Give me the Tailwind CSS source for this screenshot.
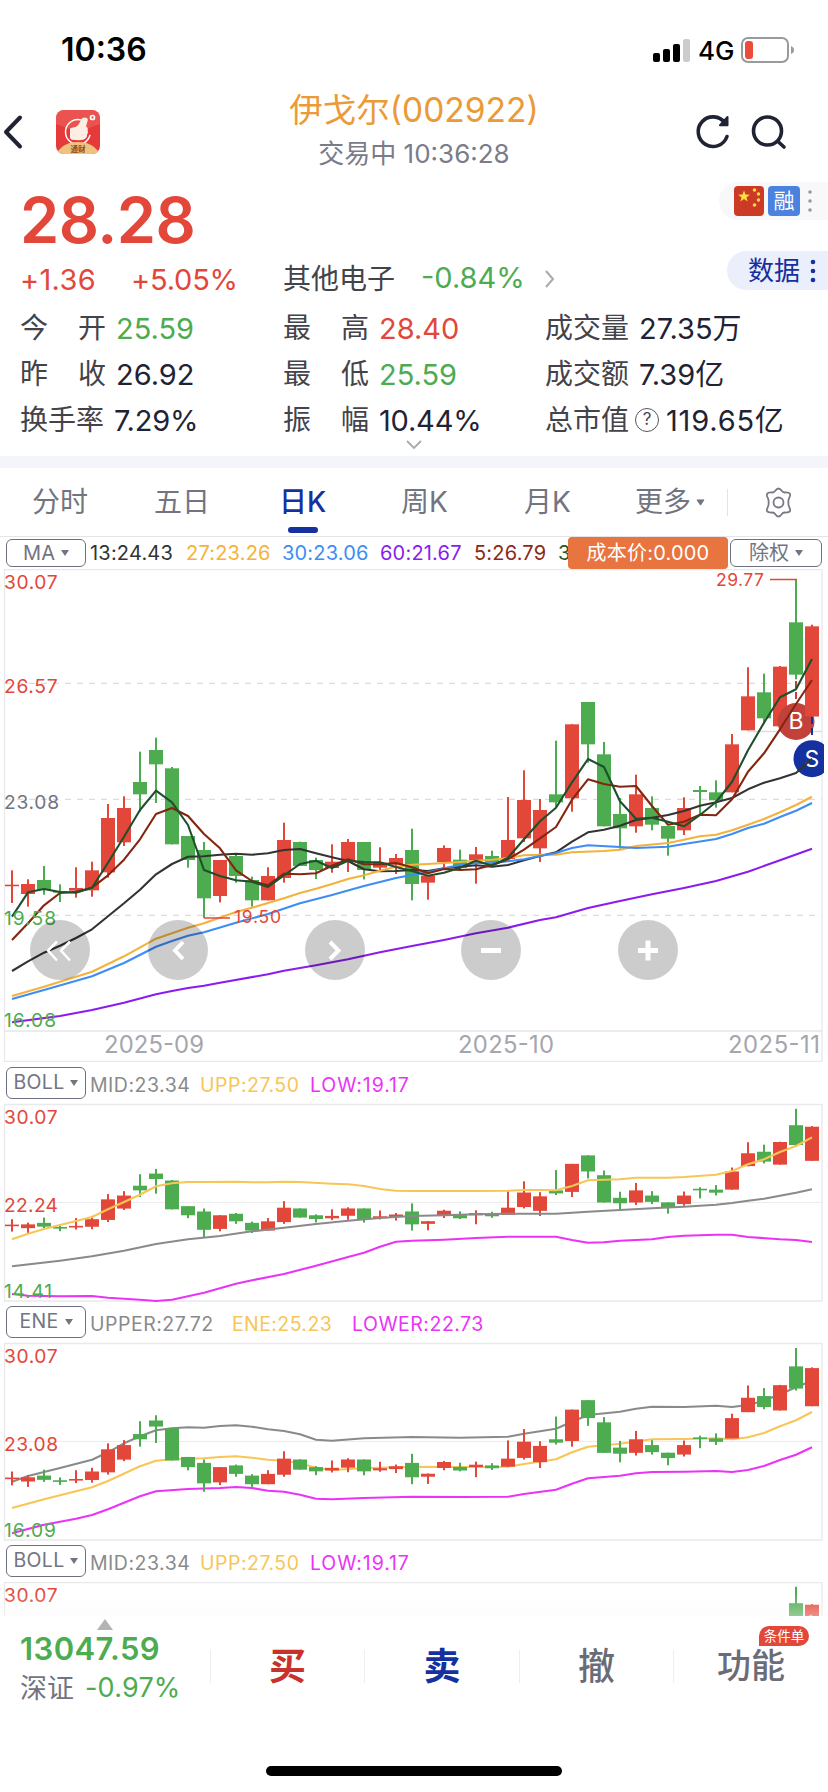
<!DOCTYPE html>
<html lang="zh-CN">
<head>
    <meta charset="UTF-8">
    <meta name="viewport" content="width=device-width, initial-scale=1.0">
    <title>伊戈尔(002922)</title>
    <script src="https://cdn.jsdelivr.net/npm/@tailwindcss/browser@4"></script>
</head>
<body class="bg-white font-['Inter','Noto_Sans_CJK_SC',sans-serif] text-[#1f2333] w-[828px] h-[1792px] overflow-hidden">

    <!-- Status bar -->
    <div class="h-[88px] flex items-center justify-between pl-[61px] pr-[34px] pt-[12px]">
        <span class="text-[32px] font-semibold text-black">10:36</span>
        <div class="flex items-center">
            <svg class="w-[38px] h-[24px]" viewBox="0 0 38 24">
                <rect x="0" y="15" width="7" height="9" rx="2"/>
                <rect x="10" y="11" width="7" height="13" rx="2"/>
                <rect x="20" y="6" width="7" height="18" rx="2"/>
                <rect x="30" y="1" width="7" height="23" rx="2" fill="#ccc"/>
            </svg>
            <span class="text-[26px] font-medium text-black ml-[7px] w-[43px]">4G</span>
            <svg class="w-[53px] h-[26px]" viewBox="0 0 53 26">
                <rect x="1" y="1" width="46" height="24" rx="6" fill="none" stroke="#9a9a9a" stroke-width="2"/>
                <rect x="4" y="4" width="8" height="18" rx="3" fill="#eb4d3d"/>
                <path d="M50 9v8c2-1 3-2 3-4s-1-3-3-4z" fill="#9a9a9a"/>
            </svg>
        </div>
    </div>

    <!-- Header -->
    <header class="h-[92px] flex items-center relative pb-[4px]">
        <svg class="w-[26px] h-[36px]" viewBox="0 0 26 36" fill="none" stroke="#1f2333" stroke-width="4" stroke-linecap="round" stroke-linejoin="round">
            <path d="M20 3.500 6 18 20 32.500"/>
        </svg>
        <svg class="w-[44px] h-[44px] ml-[30px] rounded-[8px]" viewBox="0 0 44 44">
            <rect width="44" height="44" fill="#e5393a"/>
            <path d="M0 0h44v14L22 22 0 14z" fill="#ee6a60" opacity=".55"/>
            <circle cx="22" cy="22" r="12.500" fill="none" stroke="#fff" stroke-width="1.500" stroke-dasharray="62 17" stroke-dashoffset="-3"/>
            <path d="M15 18c3-.5 6-1 7.500-3.500L26 8.500c1.500-1.500 6-1.200 5.800 1.500L30 16.500c2 .5 2 2.500 1.600 4 .6 1.500.3 3-.6 4 .2 2-.6 3.500-1.800 4-1 2-7 2-13.200 1.200-1.500-.3-2-1.500-2-3v-6c0-1.600-.1-2.500 1-2.700z" fill="#fdeee4"/>
            <circle cx="36.500" cy="7.500" r="2" fill="none" stroke="#fff" stroke-width="1.700"/>
            <path d="M2 44v-3c5-6 11-9 20-9s15 3 20 9v3z" fill="#f0c27f"/>
            <text x="22" y="41.500" font-size="7.500" font-weight="700" text-anchor="middle" fill="#8b4a20">通财</text>
        </svg>
        <div class="absolute inset-0 flex flex-col items-center pointer-events-none">
            <h1 class="text-[33.500px] leading-[44px] text-[#ea9a36]">伊戈尔(002922)</h1>
            <p class="text-[26px] leading-[36px] mt-[4px] text-[#7a7c89]">交易中 10:36:28</p>
        </div>
        <div class="ml-auto flex items-center gap-[18px] pr-[40px]">
            <svg class="w-[38px] h-[38px]" viewBox="0 0 38 38" fill="none" stroke="#1f2333" stroke-width="3.600" stroke-linecap="round">
                <path d="M33 23.500A14.800 14.800 0 1 1 31 10"/>
                <path d="M33.500 4v8.200h-7.500z" fill="#1f2333" stroke-width="2" stroke-linejoin="round"/>
            </svg>
            <svg class="w-[38px] h-[38px]" viewBox="0 0 38 38" fill="none" stroke="#1f2333" stroke-width="3.600" stroke-linecap="round">
                <circle cx="17.500" cy="18" r="14"/>
                <path d="M28 28.500 34 34"/>
            </svg>
        </div>
    </header>

    <!-- Quote -->
    <section class="h-[276px] relative pl-[20px]">
        <div class="h-[74px] flex items-center pt-[6px] text-[63px] leading-none font-semibold text-[#e3473a] tracking-[-0.5px]">28.28</div>

        <div class="absolute right-0 top-[2px] w-[109px] h-[38px] rounded-l-full bg-[#f8f8fa] flex items-center pl-[15px] gap-[4px]">
            <svg class="w-[30px] h-[30px] rounded-[4px]" viewBox="0 0 30 30">
                <rect width="30" height="30" fill="#cb3a25"/>
                <path d="M10 4.500l1.500 4.100 4.400.1-3.500 2.700 1.300 4.200-3.700-2.500-3.700 2.500 1.300-4.200-3.500-2.700 4.400-.1z" fill="#fadf3c"/>
                <g fill="#fadf3c"><circle cx="20.500" cy="4" r="1.800"/><circle cx="24.500" cy="8" r="1.700"/><circle cx="24.500" cy="14" r="1.700"/><circle cx="20.500" cy="19" r="1.800"/></g>
            </svg>
            <span class="w-[32px] h-[30px] rounded-[4px] bg-[#4b82e0] text-white text-[21px] leading-[30px] text-center">融</span>
            <svg class="w-[6px] h-[24px] ml-[3px]" viewBox="0 0 6 24" fill="#999"><circle cx="3" cy="3" r="1.800"/><circle cx="3" cy="12" r="1.800"/><circle cx="3" cy="21" r="1.800"/></svg>
        </div>
        <div class="absolute right-0 top-[71px] w-[101px] h-[39px] rounded-l-full bg-[#ebeefb] flex items-center pl-[21px]">
            <span class="text-[26px] leading-none text-[#15309f]">数据</span>
            <svg class="w-[6px] h-[24px] ml-[10px]" viewBox="0 0 6 24" fill="#15309f"><circle cx="3" cy="3" r="2.300"/><circle cx="3" cy="12" r="2.300"/><circle cx="3" cy="21" r="2.300"/></svg>
        </div>

        <div class="h-[50px] flex items-center text-[29px] leading-none text-[#e3473a]">
            <span class="w-[111px] tracking-[0.3px]">+1.36</span>
            <span class="w-[152px] tracking-[-0.2px]">+5.05%</span>
            <span class="w-[138px] text-[28px] text-[#43434a]">其他电子</span>
            <span class="w-[124px] text-[#4dab50] -mt-[3px]">-0.84%</span>
            <svg class="w-[10px] h-[18px]" viewBox="0 0 10 18" fill="none" stroke="#aaa" stroke-width="2"><path d="M1 1l7 8-7 8"/></svg>
        </div>

        <div class="grid grid-cols-[263px_262px_1fr] grid-rows-[46px_46px_46px] items-center pt-[1px] text-[28px] leading-none text-[#43434a]">
            <div class="flex"><span class="w-[86px] flex justify-between mr-[10px]"><i class="not-italic">今</i><i class="not-italic">开</i></span><b class="font-normal text-[29px] text-[#4dab50]">25.59</b></div>
            <div class="flex"><span class="w-[86px] flex justify-between mr-[10px]"><i class="not-italic">最</i><i class="not-italic">高</i></span><b class="font-normal text-[29px] text-[#e3473a]">28.40</b></div>
            <div class="flex"><span class="w-[94px]">成交量</span><b class="font-normal text-[29px] text-[#1f2333]">27.35万</b></div>
            <div class="flex"><span class="w-[86px] flex justify-between mr-[10px]"><i class="not-italic">昨</i><i class="not-italic">收</i></span><b class="font-normal text-[29px] text-[#1f2333]">26.92</b></div>
            <div class="flex"><span class="w-[86px] flex justify-between mr-[10px]"><i class="not-italic">最</i><i class="not-italic">低</i></span><b class="font-normal text-[29px] text-[#4dab50]">25.59</b></div>
            <div class="flex"><span class="w-[94px]">成交额</span><b class="font-normal text-[29px] text-[#1f2333]">7.39亿</b></div>
            <div class="flex"><span class="w-[94px]">换手率</span><b class="font-normal text-[29px] text-[#1f2333] tracking-[-0.2px]">7.29%</b></div>
            <div class="flex"><span class="w-[86px] flex justify-between mr-[10px]"><i class="not-italic">振</i><i class="not-italic">幅</i></span><b class="font-normal text-[29px] text-[#1f2333] tracking-[-0.2px]">10.44%</b></div>
            <div class="flex items-center">
                <span class="w-[90px]">总市值</span>
                <span class="w-[24px] h-[24px] rounded-full border-[1.500px] border-[#55565e] text-[17px] leading-[21px] text-center mr-[7px]">?</span>
                <b class="font-normal text-[29px] text-[#1f2333] tracking-[0.8px]">119.65亿</b>
            </div>
        </div>
        <svg class="w-[16px] h-[10px] mx-auto -translate-x-[10px] -translate-y-[3px]" viewBox="0 0 16 10" fill="none" stroke="#aaa" stroke-width="1.800"><path d="M1 1l7 7 7-7"/></svg>
    </section>
    <div class="h-[12px] bg-[#f4f5fa]"></div>

    <!-- Period tabs -->
    <nav class="h-[69px] flex items-center text-[28px] leading-none text-[#72747f] pl-[32px] relative border-b border-[#e5e5e8]">
        <span class="w-[122px]">分时</span>
        <span class="w-[125px]">五日</span>
        <span class="w-[122px] font-medium text-[#15309f] relative">日K<i class="absolute left-[9px] top-[39px] w-[30px] h-[6px] rounded-full bg-[#15309f]"></i></span>
        <span class="w-[123px]">周K</span>
        <span class="w-[111px]">月K</span>
        <span class="w-[61px]">更多</span>
        <svg class="w-[9px] h-[7px]" viewBox="0 0 10 8" fill="#72747f" stroke="#72747f" stroke-width="1" stroke-linejoin="round"><path d="M1 1h8L5 7z"/></svg>
        <i class="w-px h-[27px] bg-[#e3e4ea] ml-[22px] mr-[35px]"></i>
        <svg class="w-[31px] h-[31px]" viewBox="0 0 31 31" fill="none" stroke="#777985" stroke-width="1.800" stroke-linejoin="round">
            <path d="M15.500 1.500c1.500 0 2.300 1 3.200 2.300.9 1.300 1.600 1.800 3 1.700 3-.2 4.400-.2 5.200 1.200.8 1.300.3 2.500-.9 4.700-.9 1.600-.9 6.600 0 8.200 1.200 2.200 1.700 3.400.9 4.700-.8 1.400-2.200 1.400-5.200 1.200-1.400-.1-2.100.4-3 1.700-.9 1.300-1.700 2.300-3.200 2.300s-2.300-1-3.200-2.300c-.9-1.300-1.600-1.800-3-1.700-3 .2-4.400.2-5.200-1.200-.8-1.300-.3-2.500.9-4.700.9-1.600.9-6.600 0-8.200C3.800 9.200 3.300 8 4.100 6.700c.8-1.400 2.200-1.400 5.200-1.200 1.400.1 2.100-.4 3-1.700.9-1.300 1.700-2.300 3.200-2.300z"/>
            <circle cx="15.500" cy="15.500" r="5"/>
        </svg>
    </nav>

    <!-- MA legend -->
    <div class="h-[32px] flex items-center text-[20px] leading-none pl-[6px] relative">
        <span class="w-[80px] h-[28px] border-[1.500px] border-[#6e7080] rounded-[6px] flex items-center justify-center gap-[6px] text-[#72747f]">MA<svg class="w-[8px] h-[6px]" viewBox="0 0 8 6" fill="#72747f"><path d="M0 0h8L4 6z"/></svg></span>
        <span class="w-[96px] ml-[4px] tracking-[0.2px] text-[#333]">13:24.43</span>
        <span class="w-[96px] tracking-[0.2px] text-[#f4b23c]">27:23.26</span>
        <span class="w-[98px] tracking-[0.2px] text-[#3d8df5]">30:23.06</span>
        <span class="w-[94px] tracking-[0.2px] text-[#8a1cf0]">60:21.67</span>
        <span class="w-[84px] tracking-[0.2px] text-[#8b2a14]">5:26.79</span>
        <span class="w-[10px] text-[#1f5a35]">3</span>
        <span class="absolute left-[568px] top-0 w-[160px] h-[32px] rounded-[4px] bg-[#e8743f] text-white flex items-center justify-center tracking-[0.2px]">成本价:0.000</span>
        <span class="absolute left-[730px] top-[2px] w-[92px] h-[28px] bg-white border-[1.500px] border-[#6e7080] rounded-[6px] flex items-center justify-center gap-[6px] text-[#72747f]">除权<svg class="w-[8px] h-[6px]" viewBox="0 0 8 6" fill="#72747f"><path d="M0 0h8L4 6z"/></svg></span>
    </div>

    <svg id="main" class="block w-[828px] h-[493px]" viewBox="0 569 828 493"></svg>

    <div class="h-[42px] flex items-center text-[19.500px] leading-none pl-[6px]">
        <span class="w-[80px] h-[32px] border-[1.500px] border-[#6e7080] rounded-[6px] flex items-center justify-center gap-[6px] tracking-[0.3px] text-[#72747f]">BOLL<svg class="w-[8px] h-[6px]" viewBox="0 0 8 6" fill="#72747f"><path d="M0 0h8L4 6z"/></svg></span>
        <span class="w-[110px] ml-[4px] mt-[5px] tracking-[0.5px] text-[#8a8a8a]">MID:23.34</span>
        <span class="w-[110px] mt-[5px] tracking-[0.5px] text-[#f7c657]">UPP:27.50</span>
        <span class="mt-[5px] tracking-[0.9px] text-[#ea33f7]">LOW:19.17</span>
    </div>
    <svg id="boll" class="block w-[828px] h-[197px] overflow-visible" viewBox="0 1104 828 197"></svg>

    <div class="h-[42px] flex items-center text-[19.500px] leading-none pl-[6px]">
        <span class="w-[80px] h-[32px] border-[1.500px] border-[#6e7080] rounded-[6px] flex items-center justify-center gap-[6px] tracking-[0.3px] text-[#72747f]">ENE<svg class="w-[8px] h-[6px]" viewBox="0 0 8 6" fill="#72747f"><path d="M0 0h8L4 6z"/></svg></span>
        <span class="w-[142px] ml-[4px] mt-[5px] tracking-[0.5px] text-[#8a8a8a]">UPPER:27.72</span>
        <span class="w-[120px] mt-[5px] tracking-[0.4px] text-[#f7c657]">ENE:25.23</span>
        <span class="mt-[5px] tracking-[0.5px] text-[#ea33f7]">LOWER:22.73</span>
    </div>
    <svg id="ene" class="block w-[828px] h-[197px] overflow-visible" viewBox="0 1343 828 197"></svg>

    <div class="h-[42px] flex items-center text-[19.500px] leading-none pl-[6px]">
        <span class="w-[80px] h-[32px] border-[1.500px] border-[#6e7080] rounded-[6px] flex items-center justify-center gap-[6px] tracking-[0.3px] text-[#72747f]">BOLL<svg class="w-[8px] h-[6px]" viewBox="0 0 8 6" fill="#72747f"><path d="M0 0h8L4 6z"/></svg></span>
        <span class="w-[110px] ml-[4px] mt-[5px] tracking-[0.5px] text-[#8a8a8a]">MID:23.34</span>
        <span class="w-[110px] mt-[5px] tracking-[0.5px] text-[#f7c657]">UPP:27.50</span>
        <span class="mt-[5px] tracking-[0.9px] text-[#ea33f7]">LOW:19.17</span>
    </div>
    <div class="relative h-[34px]">
        <svg id="boll2" class="block w-[828px] h-[34px]" viewBox="0 1582 828 34"></svg>
        <div class="absolute inset-x-0 bottom-0 h-[24px] bg-linear-to-b from-[#fafafa]/0 to-[#fafafa]/40"></div>
    </div>

    <!-- Trade bar -->
    <footer class="h-[176px] relative bg-white">
        <svg class="absolute left-[97px] top-[3px] w-[16px] h-[11px]" viewBox="0 0 16 11" fill="#b3b3b3"><path d="M8 0l8 11H0z"/></svg>
        <div class="flex h-[100px]">
            <div class="w-[210px] pl-[20px] pt-[14px]">
                <div class="text-[31px] leading-[38px] font-semibold text-[#4dab50] tracking-[0.4px]">13047.59</div>
                <div class="flex items-center h-[40px] text-[27px] leading-none text-[#72747f]">
                    <span class="w-[65px]">深证</span><span class="text-[#4dab50] tracking-[0.2px] -mt-[2px]">-0.97%</span>
                </div>
            </div>
            <div class="w-[154px] flex items-center justify-center text-[37px] leading-none font-bold text-[#c8322d]"><i class="w-px h-[33px] bg-[#ededf3]"></i><span class="mx-auto">买</span></div>
            <div class="w-[155px] flex items-center justify-center text-[37px] leading-none font-bold text-[#15309f]"><i class="w-px h-[33px] bg-[#ededf3]"></i><span class="mx-auto">卖</span></div>
            <div class="w-[154px] flex items-center justify-center text-[37px] leading-none font-medium text-[#6a6c78]"><i class="w-px h-[33px] bg-[#ededf3]"></i><span class="mx-auto">撤</span></div>
            <div class="w-[155px] flex items-center justify-center text-[34px] leading-none font-medium text-[#6a6c78] relative">
                <i class="w-px h-[33px] bg-[#ededf3]"></i><span class="mx-auto">功能</span>
                <span class="absolute left-[86px] top-[10px] w-[50px] h-[20px] rounded-t-full rounded-br-full bg-[#e3473a] text-white text-[13.500px] leading-[20px] text-center font-normal">条件单</span>
            </div>
        </div>
        <div class="absolute left-[266px] top-[150px] w-[296px] h-[10px] rounded-full bg-black"></div>
    </footer>

    <script>
        const RED = '#e3473a';
        const GREEN = '#4dab50';

        // [up, high, body top, body bottom, low], one entry per day, in thirds of a pixel below y=560
        const days = [
            [1,931,974,978,1029],[1,958,972,1002,1040],[0,918,960,990,1004],[0,973,993,998,1026],[1,922,984,992,1013],
            [1,905,931,991,1010],[1,732,774,937,953],[1,709,744,847,858],[0,575,666,703,755],[0,533,570,613,729],
            [0,621,625,853,853],[0,828,828,900,923],[0,846,870,1015,1074],[1,900,900,1008,1027],[0,882,888,948,968],
            [0,950,960,1021,1040],[1,922,948,1021,1021],[1,788,840,954,968],[0,845,846,918,918],[0,893,900,930,957],
            [1,853,905,924,938],[1,837,846,904,936],[0,846,846,930,958],[1,862,908,923,933],[1,882,894,914,942],
            [0,806,870,972,1021],[1,945,947,968,1019],[1,856,864,906,922],[0,869,899,924,930],[1,861,883,900,971],
            [0,872,888,908,920],[1,711,840,897,898],[1,631,720,835,846],[1,717,750,865,906],[0,542,703,727,740],
            [1,493,493,715,755],[0,426,426,553,608],[0,546,583,799,799],[0,714,762,805,866],[1,644,703,799,818],
            [0,709,744,794,811],[0,798,798,836,887],[1,712,744,811,825],[0,678,690,696,766],[0,661,697,721,743],
            [1,522,553,697,697],[1,322,409,511,511],[0,341,397,475,490],[1,318,320,499,499],[0,57,187,344,358],
            [1,194,199,469,469]
        ];
        const toPrice = v => 26.57 + (370 - v) / 3 / 33.2;

        // day index -> height, same unit as above, measured from each chart's base
        const ma3 = [1070,997,987,996,998,983,908,830,750,692,727,795,930,948,961,965,981,946,912,902,924,902,906,907,921,933,947,938,923,902,917,893,838,784,743,667,597,621,724,776,773,785,799,765,726,666,571,488,412,388,297];
        const ma5 = [1140,1090,1036,999,995,983,946,899,838,762,744,768,822,865,931,963,976,941,943,940,917,898,913,913,909,922,940,927,930,928,915,898,869,835,801,719,658,672,680,678,738,794,785,764,766,718,635,580,508,432,360];
        const ma13 = [1233,1204,1178,1157,1134,1108,1069,1030,989,943,912,890,889,884,881,884,880,870,867,880,892,903,928,934,933,930,933,925,920,916,920,915,901,888,877,845,817,809,797,780,773,765,753,737,727,714,688,668,655,639,596];
        const ma27 = {0:1308,2:1280,5:1235,7:1189,9:1136,11:1103,12:1090,14:1056,15:1043,16:1029,17:1015,18:999,19:986,20:972,21:957,22:946,23:932,24:920,25:914,26:912,27:909,28:906,29:902,30:899,31:894,32:886,33:884,34:884,35:877,37:873,38:869,39:858,41:849,42:839,43:829,44:824,45:811,46:794,47:777,48:757,49:735,50:710};
        const ma30 = {0:1317,2:1290,5:1249,7:1209,9:1160,10:1143,11:1127,12:1117,14:1088,16:1062,18:1030,20:1005,22:978,24:954,25:945,26:937,27:925,28:915,29:910,30:910,31:904,32:898,33:888,34:879,35:864,36:856,38:861,39:864,41:860,42:852,44:837,45:822,46:804,47:791,48:771,49:752,50:729};
        const ma60 = {0:1387,3:1368,5:1350,7:1328,9:1303,10:1293,11:1284,12:1277,13:1268,16:1243,17:1232,19:1216,21:1198,23:1177,25:1158,27:1140,29:1120,31:1103,33:1080,34:1072,36:1044,38:1023,40:1003,42:984,44:963,46:935,48:901,50:866};

        const bollUpp = {0:538,1:521,2:507,5:471,6:448,8:404,9:379,10:370,11:366,12:366,14:365,15:367,16:367,17:365,18:366,20:371,21:373,22:378,23:387,24:392,25:393,29:393,31:392,32:390,33:390,34:391,35:378,36:361,38:358,39:353,41:353,42:351,44:344,45:333,46:313,47:298,48:276,49:258,50:232};
        const bollMid = {0:619,3:602,5:589,7:572,9:552,11:538,13:528,15:514,17:503,19:492,21:482,23:474,25:468,27:466,29:463,31:461,34:461,36:455,38:450,40:445,42:440,44:434,45:429,46:422,47:416,49:398,50:388};
        const bollLow = {0:702,1:707,3:709,5:708,6:713,8:719,9:723,10:719,11:709,12:698,14:671,15:661,17:642,19:617,21:591,22:578,23:560,24:545,25:542,27:539,29:534,31:530,34:530,35:540,36:548,37:547,38:542,40:538,41:531,42:527,44:524,45:524,46:531,48:538,49:540,50:546};

        const eneUpper = {0:545,1:528,3:504,5:479,6:457,7:430,8:409,9:391,10:385,11:382,12:383,13:378,14:376,15:380,16:388,17:393,18:403,19:419,20:422,22:415,25:411,28:413,31:410,32:401,34:386,35:365,36:345,38:335,39:326,40:320,42:321,44:317,45:321,46:315,47:302,48:283,49:262,50:242};
        const eneMid = {0:624,2:598,5:562,6:543,8:499,9:482,10:478,12:475,13:471,14:469,15:473,16:479,17:482,18:490,19:503,20:510,22:505,25:500,28:501,31:500,32:492,34:478,35:457,36:440,38:431,40:418,42:417,44:415,45:418,46:412,47:399,48:379,49:361,50:336};
        const eneLower = {0:700,2:674,4:656,5:645,6:628,8:589,9:574,11:567,13:564,14:561,15:564,16:572,17:575,18:584,19:596,20:598,22:594,25:590,28:591,31:590,32:582,34:569,35:551,36:535,38:527,39:520,40:516,42:515,44:513,45:516,46:510,47:498,48:480,49:464,50:442};

        function line(data, base, color) {
            const pts = Object.keys(data).map(i => `${12 + 16 * i},${(base + data[i] / 3).toFixed(1)}`).join(' ');
            return `<polyline points="${pts}" fill="none" stroke="${color}" stroke-width="2.1" stroke-linejoin="round"/>`;
        }

        function candles(y) {
            return days.map(([up, high, top, bottom, low], i) => {
                const x = 12 + 16 * i;
                const c = up ? RED : GREEN;
                const t = y(top);
                return `<rect x="${x - 1}" y="${y(high)}" width="2" height="${Math.max(y(low) - y(high), 0)}" fill="${c}"/>` +
                    `<rect x="${x - 7}" y="${t}" width="14" height="${Math.max(y(bottom) - t, 1.6)}" fill="${c}"/>`;
            }).join('');
        }

        function label(x, y, width, text, color, size = 19.2) {
            return `<text x="${x}" y="${y}" textLength="${width}" font-size="${size}" fill="${color}">${text}</text>`;
        }

        function rule(y, dashed) {
            return `<path d="M5 ${y}H822" stroke="${dashed ? '#dcdce0' : '#ececee'}" stroke-width="1.2" ${dashed ? 'stroke-dasharray="6 6"' : ''}/>`;
        }

        function frame(top, bottom) {
            return `<path d="M4.500 ${top}V${bottom}M822 ${top}V${bottom}M4 ${top + 0.5}H822M4 ${bottom - 0.5}H822" stroke="#e9e9ec" stroke-width="1.300" fill="none"/>`;
        }

        function roundButton(cx, icon, weight) {
            return `<circle cx="${cx}" cy="950" r="30" fill="#000" fill-opacity=".2"/>` +
                `<path d="${icon}" transform="translate(${cx} 950.500)" fill="none" stroke="#fff" stroke-width="${weight}"/>`;
        }

        // Main K-line chart
        document.getElementById('main').innerHTML =
            frame(569, 1062) + `<path d="M4 1031H822" stroke="#e6e6e9" stroke-width="1.600"/>` +
            rule(683.3, true) + rule(799.3, true) + rule(915.3, true) +
            '<path d="M748 731.500H822" stroke="#dddde2" stroke-width="1.500"/>' +
            candles(v => 560 + v / 3) +
            '<path d="M796 681V702" stroke="#c0403a" stroke-width="2" stroke-dasharray="7 4"/>' +
            '<circle cx="796" cy="721.500" r="18.500" fill="#c2423b"/>' +
            `<rect x="805" y="690" width="14" height="26.300" fill="${RED}"/>` +
            '<text x="796" y="729" text-anchor="middle" font-size="23" fill="#fff">B</text>' +
            '<path d="M812 717V735" stroke="#15309f" stroke-width="2" stroke-dasharray="7 4"/>' +
            '<clipPath id="edge"><path d="M0 569H824V1062H0z"/></clipPath>' +
            '<circle cx="812" cy="758.700" r="18.500" fill="#15309f" clip-path="url(#edge)"/>' +
            '<text x="812" y="767" text-anchor="middle" font-size="23" fill="#fff">S</text>' +
            line(ma13, 560, '#333') + line(ma27, 560, '#f4b23c') + line(ma30, 560, '#3d8df5') +
            line(ma60, 560, '#8a1cf0') + line(ma5, 560, '#84260f') + line(ma3, 560, '#1f4f2c') +
            `<path d="M204 918H230M770 579.500H797" stroke="${RED}" stroke-width="1.500"/>` +
            label(234, 923, 47, '19.50', RED, 17.5) + label(716, 585.5, 48, '29.77', RED, 17.5) +
            label(4, 589, 53.5, '30.07', RED) + label(4, 693, 53.5, '26.57', RED) +
            label(4, 809, 55, '23.08', '#72747f') + label(4, 925, 52, '19.58', GREEN) + label(4, 1027, 52, '16.08', GREEN) +
            label(104, 1053, 100, '2025-09', '#a5a6ad', 23.8) + label(458, 1053, 96, '2025-10', '#a5a6ad', 23.8) +
            label(728, 1053, 92, '2025-11', '#a5a6ad', 23.8) +
            roundButton(60, 'M-3 -9 -12 0 -3 10M10 -9 1 0 10 10', 2.5) +
            roundButton(178, 'M5 -8.500 -3 0 5 8.500', 4) +
            roundButton(335, 'M-5 -8.500 3.500 0 -5 8.500', 4) +
            roundButton(491, 'M-10 0H10', 5) +
            roundButton(648, 'M-10 0H10M0 -10V10', 5);

        const boll = top => candles(v => top + (30.07 - toPrice(v)) * 12.58) +
            line(bollUpp, top - 44.3, '#f7c657') + line(bollMid, top - 44.3, '#8a8a8a') + line(bollLow, top - 44.3, '#ea33f7');

        document.getElementById('boll').innerHTML =
            frame(1104, 1301.5) + rule(1202.5) + boll(1104.3) +
            label(4, 1124, 53.5, '30.07', RED) + label(4, 1212, 54, '22.24', RED) + label(4, 1298, 48, '14.41', GREEN);

        document.getElementById('ene').innerHTML =
            frame(1343, 1540.5) + rule(1441.5) +
            line(eneUpper, 1300, '#8a8a8a') + line(eneMid, 1300, '#f7c657') + line(eneLower, 1300, '#ea33f7') +
            candles(v => 1343 + (30.07 - toPrice(v)) * 14.07) +
            label(4, 1363, 53.5, '30.07', RED) + label(4, 1451, 54, '23.08', RED) + label(4, 1537, 52, '16.09', GREEN);

        document.getElementById('boll2').innerHTML =
            frame(1582, 1780) + boll(1582.3) + label(4, 1602, 53.5, '30.07', RED);
    </script>
</body>
</html>
